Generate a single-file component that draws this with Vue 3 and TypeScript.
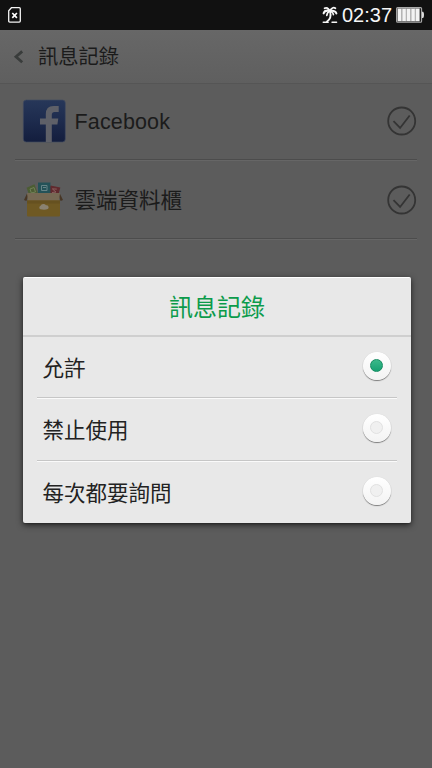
<script setup lang="ts">
import { ref } from 'vue'

interface AppItem {
  id: string
  name: string
}

const apps: AppItem[] = [
  { id: 'facebook', name: 'Facebook' },
  { id: 'cloud', name: '雲端資料櫃' },
]

const options: string[] = ['允許', '禁止使用', '每次都要詢問']
const selected = ref<number>(0)
</script>

<template>
  <div class="screen">
    <div class="status">
      <svg class="sim" width="16" height="18" viewBox="0 0 16 18">
        <path d="M4.4 1.7H12.2Q13.3 1.7 13.3 2.8V15Q13.3 16.1 12.2 16.1H2.8Q1.7 16.1 1.7 15V4.7Z" fill="none" stroke="#f4f4f4" stroke-width="1.3" />
        <path d="M5.3 7L9.9 11.8M9.9 7L5.3 11.8" stroke="#fff" stroke-width="1.7" />
      </svg>
      <div class="status-right">
        <svg class="palm" width="16" height="18" viewBox="0 0 16 18">
          <g fill="none" stroke="#f6f6f6" stroke-linecap="round">
            <path d="M7.7 5Q5.4 .6 2.6 2.3M7.7 5Q10.6 .3 13.4 2.3" stroke-width="1.8" />
            <path d="M7.7 5Q2.8 3.6 1.6 7.4M7.7 5Q13.6 4.2 14.4 7.6" stroke-width="2" />
            <path d="M7.7 5.2Q5.2 6 4.8 9.4M9 5.4Q11.4 6.6 11.4 8.6" stroke-width="1.7" />
            <path d="M8 5.2Q10 12.2 5 15.6" stroke-width="1.8" />
            <path d="M1.2 16.2H6.2M10 16.2H14.6" stroke-width="1.4" />
          </g>
        </svg>
        <span class="time">02:37</span>
        <svg class="battery" width="29" height="16" viewBox="0 0 29 16">
          <rect x=".6" y=".6" width="25" height="14.6" rx="1" fill="#222" stroke="#aaa" stroke-width="1.1" />
          <path d="M26 4.7H27.2Q28 5.5 28 7.8T27.2 11H26Z" fill="#ddd" />
          <g fill="#f3f3f3">
            <rect v-for="n in 5" :key="n" :x="n * 4.5 - 2.9" y="1.5" width="4" height="12.8" />
          </g>
          <path d="M5.8 1.5V14.3M10.3 1.5V14.3M14.8 1.5V14.3M19.3 1.5V14.3" stroke="#bbb" stroke-width="1.2" />
        </svg>
      </div>
    </div>

    <header class="header">
      <svg class="back" width="12" height="14" viewBox="0 0 12 14">
        <path d="M9.2 1.4L3 6.8L9.2 12.2" fill="none" stroke="#393c3b" stroke-width="2.8" />
      </svg>
      <span>訊息記錄</span>
    </header>

    <main class="apps">
      <div v-for="app in apps" :key="app.id" class="app" :class="app.id">
        <svg v-if="app.id === 'facebook'" class="app-icon" width="44" height="44" viewBox="0 0 44 44">
          <defs>
            <linearGradient id="fb" x2="0" y2="1">
              <stop offset="0" stop-color="#273759" />
              <stop offset=".5" stop-color="#1d2b4d" />
              <stop offset="1" stop-color="#131d3d" />
            </linearGradient>
          </defs>
          <rect x="1.3" y="1" width="42" height="42" rx="3" fill="url(#fb)" stroke="#414a60" stroke-width=".7" />
          <path d="M23.8 43V25.6H18V19.6H23.8V15.2Q23.8 7 31.5 7H36.7V12.9H32.6Q29.8 12.9 29.8 16V19.6H36.3L35.4 25.6H29.8V43Z" fill="#5e6068" />
        </svg>
        <svg v-else class="app-icon" width="44" height="44" viewBox="0 -1.5 44 44">
          <path d="M4.6 8.2L12.4 4.8L16.4 15L7.6 17Z" fill="#4c5d33" />
          <path d="M8 9.5L12 8L13.5 12.5L9.3 13.4Z" fill="none" stroke="#718057" />
          <path d="M28.4 6L38.3 8L36 17H25.8Z" fill="#612a2e" />
          <path d="M34.8 9.6L30.4 9.4L34 12.6L30 13" fill="none" stroke="#8a6060" />
          <rect x="16" y="3" width="12.4" height="14" fill="#245258" />
          <path d="M19.5 6H25V11H19.5ZM21 8H24" fill="none" stroke="#678487" />
          <path d="M5 14L2 20.5L4.4 21.4L6.4 16ZM37.8 14L41 20.5L38.6 21.4L36.6 16Z" fill="#473625" />
          <path d="M5 13.5H38L37 21.5H6Z" fill="#766954" />
          <path d="M5 21H38V36Q38 37 37 37H6Q5 37 5 36Z" fill="#6f5923" />
          <path d="M5 21H38V24H5Z" fill="#665120" />
          <path d="M18.3 29.8A2 2 0 0 1 18.5 26.2A3.2 3.2 0 0 1 24 25.8A2.1 2.1 0 0 1 25.8 29.5Q23 30.8 18.3 29.8Z" fill="#8a8271" />
        </svg>
        <span class="app-name">{{ app.name }}</span>
        <svg class="check" width="30" height="30" viewBox="0 0 30 30">
          <circle cx="14.7" cy="15" r="13.5" fill="none" stroke="#343434" stroke-width="1.8" />
          <path d="M6.5 15.2L13.1 22L22.7 9.5" fill="none" stroke="#343434" stroke-width="1.8" />
        </svg>
      </div>
    </main>

    <section class="dialog" role="dialog">
      <h1 class="dialog-title">訊息記錄</h1>
      <div v-for="(option, i) in options" :key="option" class="option" @click="selected = i">
        <span class="label">{{ option }}</span>
        <span class="radio"><span class="dot" :class="{ on: selected === i }"></span></span>
      </div>
    </section>
  </div>
</template>

<style>
body {
  margin: 0;
  background: #5c5c5c;
}
</style>

<style scoped>
.screen {
  position: relative;
  width: 432px;
  height: 768px;
  overflow: hidden;
  background: #5c5c5c;
  font-family: "Liberation Sans", "Noto Sans CJK TC", sans-serif;
  color: #1b1b1b;
}
.status {
  display: flex;
  justify-content: space-between;
  align-items: center;
  box-sizing: border-box;
  height: 30px;
  padding: 0 7px;
  background: #111;
}
.status-right {
  display: flex;
  align-items: center;
}
.time {
  width: 51px;
  margin: 0 3px 0 4px;
  font-size: 20px;
  line-height: 28px;
  color: #f6f6f6;
}
.header {
  display: flex;
  align-items: center;
  box-sizing: border-box;
  height: 54px;
  padding-left: 13px;
  background: linear-gradient(#676767, #5f5f5f);
  border-bottom: 1px solid #555;
  font-size: 20.3px;
  line-height: 30px;
}
.back {
  margin-right: 13px;
}
.app {
  display: flex;
  align-items: center;
  box-sizing: border-box;
  height: 79px;
  margin: 0 15px;
  padding: 1px 0 0 7px;
  border-bottom: 1px solid #4c4c4c;
  box-shadow: 0 1px #666;
}
.facebook {
  height: 76px;
  padding: 0 0 1px 7px;
}
.app-name {
  flex: 1;
  margin-left: 8.5px;
  padding-top: 2px;
  font-size: 21.5px;
  line-height: 32px;
}
.facebook .app-name {
  letter-spacing: 0.15px;
}
.dialog {
  position: absolute;
  left: 23px;
  top: 277px;
  box-sizing: border-box;
  width: 388px;
  height: 246px;
  border-top: 1px solid #fff;
  border-radius: 2px;
  background: #e8e8e8;
  box-shadow: 0 1px 1px #2226, 0 2px 6px #000a;
}
.dialog-title {
  box-sizing: border-box;
  height: 59px;
  margin: 0;
  border-bottom: 2px solid #cfcfcf;
  font-size: 24px;
  font-weight: 400;
  line-height: 59px;
  text-align: center;
  color: #0c9b4b;
}
.option {
  display: flex;
  align-items: center;
  justify-content: space-between;
  box-sizing: border-box;
  height: 63px;
  margin: 0 14px;
  padding: 0 6.5px 0 5.5px;
  font-size: 21.5px;
  line-height: 32px;
  color: #222;
}
.option:nth-of-type(1) {
  height: 61px;
}
.option:last-child {
  height: 62px;
}
.option:not(:last-child) {
  border-bottom: 1px solid #c6c6c6;
  box-shadow: 0 1px #fafafa;
}
.label {
  padding-top: 4px;
}
.radio {
  display: grid;
  place-items: center;
  box-sizing: border-box;
  width: 28px;
  height: 28px;
  margin-bottom: 2px;
  padding-bottom: 1px;
  border-radius: 50%;
  background: linear-gradient(#fff, #f3f3f3);
  box-shadow: 0 1px 1px #0007, 0 0 1px #0002;
}
.dot {
  box-sizing: border-box;
  width: 13px;
  height: 13px;
  border: 1px solid #e1e1e1;
  border-radius: 50%;
  background: #f0f0f0;
}
.dot.on {
  border-color: #168c61;
  background: linear-gradient(#3bb98a, #17a172);
}
</style>
